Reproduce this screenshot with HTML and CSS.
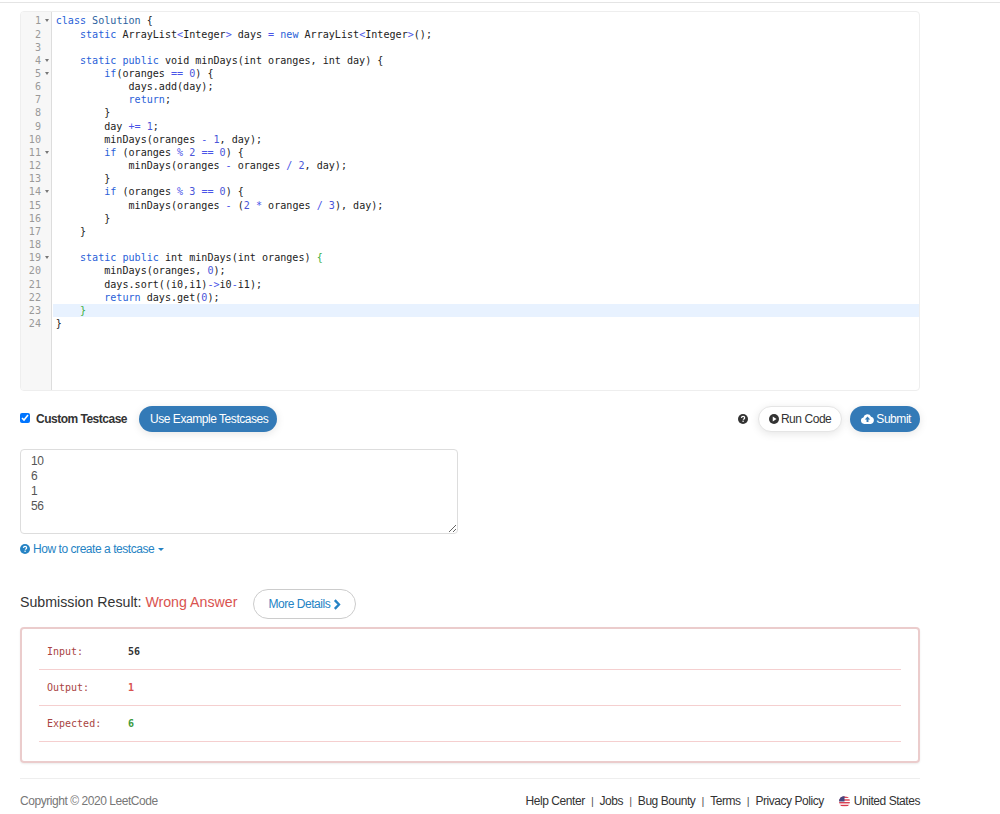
FILE: index.html
```html
<!DOCTYPE html>
<html lang="en">
<head>
    <meta charset="UTF-8">
    <meta name="viewport" content="width=device-width, initial-scale=1.0">
    <title>Submission Result</title>
    <link rel="stylesheet" href="styles.css">
</head>
<body>
    <div class="top-line"></div>
    <div class="container">
        <div class="editor">
            <div class="gutter">
                <div class="num fold">1</div>
                <div class="num">2</div>
                <div class="num">3</div>
                <div class="num fold">4</div>
                <div class="num fold">5</div>
                <div class="num">6</div>
                <div class="num">7</div>
                <div class="num">8</div>
                <div class="num">9</div>
                <div class="num">10</div>
                <div class="num fold">11</div>
                <div class="num">12</div>
                <div class="num">13</div>
                <div class="num fold">14</div>
                <div class="num">15</div>
                <div class="num">16</div>
                <div class="num">17</div>
                <div class="num">18</div>
                <div class="num fold">19</div>
                <div class="num">20</div>
                <div class="num">21</div>
                <div class="num">22</div>
                <div class="num">23</div>
                <div class="num">24</div>
            </div>
            <div class="code">
                <div class="line"><span class="kw">class</span> <span class="def">Solution</span> {</div>
                <div class="line">    <span class="kw">static</span> ArrayList<span class="op">&lt;</span>Integer<span class="op">&gt;</span> days <span class="op">=</span> <span class="kw">new</span> ArrayList<span class="op">&lt;</span>Integer<span class="op">&gt;</span>();</div>
                <div class="line"> </div>
                <div class="line">    <span class="kw">static</span> <span class="kw">public</span> void minDays(int oranges, int day) {</div>
                <div class="line">        <span class="kw">if</span>(oranges <span class="op">==</span> <span class="nr">0</span>) {</div>
                <div class="line">            days.add(day);</div>
                <div class="line">            <span class="kw">return</span>;</div>
                <div class="line">        }</div>
                <div class="line">        day <span class="op">+=</span> <span class="nr">1</span>;</div>
                <div class="line">        minDays(oranges <span class="op">-</span> <span class="nr">1</span>, day);</div>
                <div class="line">        <span class="kw">if</span> (oranges <span class="op">%</span> <span class="nr">2</span> <span class="op">==</span> <span class="nr">0</span>) {</div>
                <div class="line">            minDays(oranges <span class="op">-</span> oranges <span class="op">/</span> <span class="nr">2</span>, day);</div>
                <div class="line">        }</div>
                <div class="line">        <span class="kw">if</span> (oranges <span class="op">%</span> <span class="nr">3</span> <span class="op">==</span> <span class="nr">0</span>) {</div>
                <div class="line">            minDays(oranges <span class="op">-</span> (<span class="nr">2</span> <span class="op">*</span> oranges <span class="op">/</span> <span class="nr">3</span>), day);</div>
                <div class="line">        }</div>
                <div class="line">    }</div>
                <div class="line"> </div>
                <div class="line">    <span class="kw">static</span> <span class="kw">public</span> int minDays(int oranges) <span class="match">{</span></div>
                <div class="line">        minDays(oranges, <span class="nr">0</span>);</div>
                <div class="line">        days.sort((i0,i1)<span class="op">-&gt;</span>i0<span class="op">-</span>i1);</div>
                <div class="line">        <span class="kw">return</span> days.get(<span class="nr">0</span>);</div>
                <div class="line active">    <span class="match">}</span></div>
                <div class="line">}</div>
            </div>
        </div>

        <div class="actions">
            <label class="custom"><input type="checkbox" checked> Custom Testcase</label>
            <button class="btn primary use-example">Use Example Testcases</button>
            <div class="actions-right">
                <svg class="help" viewBox="0 0 20 20" width="10" height="10"><circle cx="10" cy="10" r="10" fill="#333"/><path d="M6.800 7.600c.3-1.800 1.600-2.700 3.300-2.700 1.800 0 3.200 1.100 3.200 2.700 0 2.400-2.600 2.200-2.600 4.100" fill="none" stroke="#fff" stroke-width="2.500"/><rect x="8.900" y="13.200" width="2.600" height="2.600" fill="#fff"/></svg>
                <button class="btn plain">
                    <svg viewBox="0 0 20 20" width="10" height="10"><circle cx="10" cy="10" r="10" fill="#333"/><path d="M7.500 5.200 15 10l-7.500 4.800z" fill="#fff"/></svg>
                    Run Code
                </button>
                <button class="btn primary">
                    <svg viewBox="0 0 24 18" width="13" height="10"><path d="M6 18a6 6 0 0 1-1.600-11.800A7.500 7.500 0 0 1 18.600 5 6.600 6.600 0 0 1 18 18z" fill="#fff"/><path d="M12 4.500 17 10h-3.200v4.500h-3.600V10H7z" fill="#337ab7"/></svg>
                    Submit
                </button>
            </div>
        </div>

        <textarea class="testcase">10
6
1
56</textarea>

        <a class="howto" href="#">
            <svg viewBox="0 0 20 20" width="10" height="10"><circle cx="10" cy="10" r="10" fill="#2583c4"/><path d="M6.800 7.600c.3-1.800 1.600-2.700 3.300-2.700 1.800 0 3.200 1.100 3.200 2.700 0 2.400-2.600 2.200-2.600 4.100" fill="none" stroke="#fff" stroke-width="2.500"/><rect x="8.900" y="13.200" width="2.600" height="2.600" fill="#fff"/></svg>
            How to create a testcase<span class="caret"></span>
        </a>

        <div class="result-head">
            <h3>Submission Result: <span class="wrong">Wrong Answer</span></h3>
            <a class="details" href="#">More Details
                <svg viewBox="0 0 10 14" width="8" height="11"><path d="M2.200 1.500 7.500 7l-5.300 5.500" fill="none" stroke="#2583c4" stroke-width="3"/></svg>
            </a>
        </div>

        <div class="result-box">
            <div class="row"><span class="label">Input:</span><span class="value">56</span></div>
            <div class="row"><span class="label">Output:</span><span class="value bad">1</span></div>
            <div class="row"><span class="label">Expected:</span><span class="value good">6</span></div>
        </div>

        <footer>
            <span class="copyright">Copyright © 2020 LeetCode</span>
            <div class="links">
                <a href="#">Help Center</a><span class="sep">|</span>
                <a href="#">Jobs</a><span class="sep">|</span>
                <a href="#">Bug Bounty</a><span class="sep">|</span>
                <a href="#">Terms</a><span class="sep">|</span>
                <a href="#">Privacy Policy</a>
                <a class="region" href="#">
                    <svg viewBox="0 0 20 20" width="11" height="11">
                        <clipPath id="flagClip"><circle cx="10" cy="10" r="10"/></clipPath>
                        <g clip-path="url(#flagClip)">
                            <rect width="20" height="20" fill="#fff"/>
                            <rect y="1" width="20" height="2.500" fill="#d8384c"/>
                            <rect y="6" width="20" height="2.500" fill="#d8384c"/>
                            <rect y="11" width="20" height="2.500" fill="#d8384c"/>
                            <rect y="16" width="20" height="2.500" fill="#d8384c"/>
                            <rect width="10" height="10" fill="#46467f"/>
                        </g>
                    </svg>
                    United States
                </a>
            </div>
        </footer>
    </div>
</body>
</html>
```

FILE: styles.css
```css
/* Page */
body {
    margin: 0;
    font-family: "Liberation Sans", Arial, sans-serif;
    font-size: 12px;
    letter-spacing: -0.45px;
    color: #333;
    background-color: #fff;
}
a {
    text-decoration: none;
}
.top-line {
    height: 3px;
    border-bottom: 1px solid #e4e4e4;
    box-sizing: border-box;
}
.container {
    width: 900px;
    margin-left: 20px;
    padding-top: 8px;
}

/* Editor */
.editor {
    display: flex;
    height: 380px;
    box-sizing: border-box;
    border: 1px solid #eee;
    border-radius: 4px;
    overflow: hidden;
    letter-spacing: 0;
}
.gutter {
    width: 31px;
    flex-shrink: 0;
    padding-top: 2.4px;
    box-sizing: border-box;
    background-color: #f7f7f7;
    border-right: 1px solid #ddd;
}
.num {
    position: relative;
    height: 13.17px;
    line-height: 13.17px;
    padding-right: 10px;
    text-align: right;
    font-family: "DejaVu Sans Mono", monospace;
    font-size: 10.08px;
    color: #999;
}
.fold::after {
    content: "";
    position: absolute;
    right: 2px;
    top: 5px;
    border-left: 2px solid transparent;
    border-right: 2px solid transparent;
    border-top: 3px solid #777;
}
.code {
    flex: 1;
    padding-top: 2.4px;
    margin-left: 1px;
    font-family: "DejaVu Sans Mono", monospace;
    font-size: 10.08px;
    color: #222;
}
.line {
    height: 13.17px;
    line-height: 13.17px;
    padding-left: 2.7px;
    white-space: pre;
}
.active {
    background-color: #e8f2ff;
}
.kw { color: #2a5fd8; }
.def { color: #2b5f9e; }
.op { color: #4a55e8; }
.nr { color: #4a55d8; }
.match { color: #3cb043; }

/* Testcase actions */
.actions {
    display: flex;
    align-items: center;
    height: 26px;
    margin-top: 15px;
}
.custom {
    display: flex;
    align-items: center;
    gap: 6px;
    font-weight: bold;
    letter-spacing: -0.5px;
    color: #333;
}
.custom input {
    width: 10px;
    height: 10px;
    margin: 0 0 2px;
}
.btn {
    height: 26px;
    padding: 0 8px 0 10px;
    border: 1px solid transparent;
    border-radius: 13px;
    font-family: inherit;
    font-size: 12px;
    letter-spacing: inherit;
    display: inline-flex;
    align-items: center;
    gap: 2px;
    box-shadow: 0 2px 8px rgba(0, 0, 0, 0.1);
}
.primary {
    background-color: #337ab7;
    color: #fff;
}
.plain {
    padding-right: 10px;
    background-color: #fff;
    border-color: #e5e5e5;
    color: #333;
}
.use-example {
    margin-left: 12px;
}
.actions-right {
    margin-left: auto;
    display: flex;
    align-items: center;
    gap: 8px;
}
.help {
    margin-right: 2px;
}
.testcase {
    display: block;
    width: 438px;
    height: 85px;
    box-sizing: border-box;
    margin-top: 17px;
    padding: 4px 10px;
    border: 1px solid #ddd;
    border-radius: 4px;
    font-family: inherit;
    font-size: 12px;
    letter-spacing: inherit;
    line-height: 15px;
    color: #555;
    outline: none;
}
.howto {
    display: flex;
    align-items: center;
    gap: 3px;
    margin-top: 8px;
    height: 14px;
    color: #2583c4;
}
.caret {
    margin-left: 1px;
    border-left: 3px solid transparent;
    border-right: 3px solid transparent;
    border-top: 3px solid #2583c4;
}

/* Result */
.result-head {
    display: flex;
    align-items: center;
    margin-top: 33px;
    height: 30px;
}
h3 {
    margin: 0 0 5px;
    font-size: 14.2px;
    font-weight: normal;
    letter-spacing: 0;
    color: #333;
}
.wrong {
    color: #d9534f;
}
.details {
    display: flex;
    align-items: center;
    gap: 3px;
    height: 30px;
    box-sizing: border-box;
    margin-left: 16px;
    padding: 0 14px;
    border: 1px solid #ccc;
    border-radius: 15px;
    color: #2583c4;
}
.result-box {
    height: 136px;
    box-sizing: border-box;
    margin-top: 8px;
    padding: 5px 17px 0;
    border: 2px solid #ebcccc;
    border-radius: 4px;
    box-shadow: 0 1px 2px rgba(0, 0, 0, 0.08);
}
.row {
    display: flex;
    align-items: center;
    height: 36px;
    box-sizing: border-box;
    padding-left: 8px;
    padding-bottom: 1px;
    border-bottom: 1px solid #f5cfcf;
    font-family: "DejaVu Sans Mono", monospace;
    font-size: 10px;
    letter-spacing: 0;
}
.label {
    width: 81px;
    color: #a94442;
}
.value {
    font-weight: bold;
    color: #333;
}
.bad {
    color: #d9534f;
}
.good {
    color: #3c9a3c;
}

/* Footer */
footer {
    display: flex;
    align-items: center;
    justify-content: space-between;
    height: 36px;
    box-sizing: border-box;
    padding-top: 9px;
    margin-top: 15px;
    border-top: 1px solid #eee;
}
.copyright {
    color: #777;
}
.links a {
    color: #333;
}
.links {
    display: flex;
    align-items: center;
}
.sep {
    margin: 0 6.2px;
    color: #555;
    font-size: 11px;
}
.region {
    display: flex;
    align-items: center;
    gap: 4px;
    margin-left: 15px;
}
```
